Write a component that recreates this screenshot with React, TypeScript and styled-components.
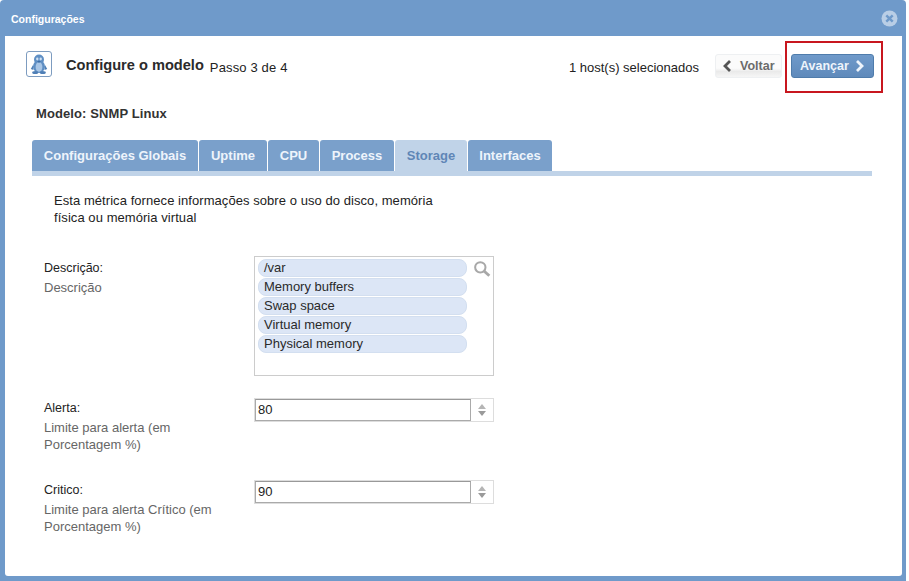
import React from "react";
import styled, { createGlobalStyle } from "styled-components";

const Global = createGlobalStyle`
  html, body { margin: 0; padding: 0; background: #fff; }
  body { font-family: "Liberation Sans", Arial, sans-serif; color: #222; width: 909px; min-height: 581px; }
`;

const Modal = styled.div`
  position: relative;
  box-sizing: border-box;
  width: 906px;
  height: 581px;
  padding-top: 1px;
  display: flex;
  flex-direction: column;
  background: #6f9aca;
  border-radius: 4px 4px 0 0;
`;
const TitleBar = styled.div`
  height: 35px;
  flex: none;
  display: flex;
  align-items: center;
  justify-content: space-between;
  padding: 0 8px 0 11px;
  color: #fff;
  font-size: 10.5px;
  font-weight: bold;
`;
const Body = styled.div`
  flex: 1;
  margin: 0 4px 5px 5px;
  background: #fff;
  border-radius: 0 0 3px 3px;
  padding: 15px 28px 0 21px;
`;
const Header = styled.div`
  display: flex;
  align-items: center;
  height: 26px;
`;
const IconBox = styled.div`
  width: 24px;
  height: 24px;
  border: 1px solid #7d9cc0;
  border-radius: 3px;
  display: flex;
  align-items: center;
  justify-content: center;
  margin-right: 14px;
`;
const Title = styled.span`
  font-size: 14.6px;
  font-weight: bold;
  color: #2b2b2b;
  margin-top: 2px;
`;
const Step = styled.span`
  font-size: 13px;
  letter-spacing: 0.15px;
  color: #222;
  margin: 6px 0 0 6px;
`;
const Hosts = styled.span`
  margin: 6px 16px 0 auto;
  font-size: 13px;
  color: #222;
`;
const NavButton = styled.button<{ $primary?: boolean }>`
  box-sizing: border-box;
  height: 24px;
  display: flex;
  align-items: center;
  gap: ${(p) => (p.$primary ? "6px" : "8px")};
  padding: 0 ${(p) => (p.$primary ? "8px" : "6px")};
  width: ${(p) => (p.$primary ? "83px" : "67px")};
  margin: 4px 0 0 ${(p) => (p.$primary ? "9px" : "0")};
  font: bold 12.5px "Liberation Sans", Arial, sans-serif;
  border-radius: 3px;
  border: 1px solid ${(p) => (p.$primary ? "#4f7cab" : "#eef0f2")};
  color: ${(p) => (p.$primary ? "#eef4fb" : "#6b6b6b")};
  background: ${(p) =>
    p.$primary
      ? "linear-gradient(#6f9aca, #5f8abb)"
      : "linear-gradient(#fbfbfb 60%, #eaeaea 75%, #f6f6f6)"};
`;
const ModelLine = styled.div`
  margin: 29px 0 0 10px;
  font-size: 13px;
  font-weight: bold;
  letter-spacing: 0.1px;
  color: #333;
  line-height: 16px;
`;
const Tabs = styled.div`
  display: flex;
  gap: 1px;
  margin: 18px 0 0 6px;
  height: 31px;
  align-items: stretch;
`;
const Tab = styled.div<{ $active?: boolean; $w: number }>`
  box-sizing: border-box;
  width: ${(p) => p.$w}px;
  display: flex;
  align-items: center;
  justify-content: center;
  border-radius: 3px 3px 0 0;
  font-size: 13px;
  font-weight: bold;
  background: ${(p) => (p.$active ? "#c0d3e8" : "#7aa0cb")};
  color: ${(p) => (p.$active ? "#5f86b6" : "#eef4fb")};
`;
const TabStrip = styled.div`
  height: 5px;
  margin: 0 2px 0 6px;
  background: #c0d3e8;
`;
const Intro = styled.p`
  margin: 16px 0 0 28px;
  width: 400px;
  font-size: 13px;
  letter-spacing: 0.06px;
  line-height: 17px;
  color: #222;
`;
const Form = styled.div`
  margin: 30px 0 0 18px;
  display: flex;
  flex-direction: column;
`;
const Row = styled.div<{ $gap?: number }>`
  display: grid;
  grid-template-columns: 210px 240px;
  margin-top: ${(p) => p.$gap ?? 0}px;
`;
const Label = styled.div<{ $top: number }>`
  font-size: 12.5px;
  line-height: 17px;
  padding-top: ${(p) => p.$top}px;
  color: #222;
`;
const Hint = styled.div`
  font-size: 13px;
  line-height: 17px;
  margin-top: 2px;
  color: #666;
  width: 175px;
`;
const ListBox = styled.div`
  position: relative;
  box-sizing: border-box;
  height: 120px;
  border: 1px solid #ccc;
  padding: 2px 26px 0 3px;
  display: flex;
  flex-direction: column;
  gap: 1px;
`;
const Chip = styled.div`
  height: 18px;
  box-sizing: border-box;
  padding-left: 5px;
  border: 1px solid #d3dff0;
  border-radius: 8px;
  background: #dce6f6;
  font-size: 13px;
  line-height: 16px;
  color: #2a2a2a;
`;
const SearchIcon = styled.svg`
  position: absolute;
  top: 3px;
  right: 2px;
`;
const Spin = styled.div`
  box-sizing: border-box;
  height: 24px;
  border: 1px solid #ddd;
  display: flex;
  align-items: stretch;
`;
const NumberValue = styled.div`
  flex: 1;
  border: 1px solid #aaa;
  border-top-color: #999;
  font-size: 13px;
  line-height: 20px;
  padding-left: 2px;
  color: #222;
`;
const Arrows = styled.div`
  width: 22px;
  display: flex;
  flex-direction: column;
  align-items: center;
  justify-content: center;
  gap: 2px;
`;
const Arrow = styled.div<{ $down?: boolean }>`
  width: 0;
  height: 0;
  border-left: 4px solid transparent;
  border-right: 4px solid transparent;
  ${(p) => (p.$down ? "border-top: 5px solid #9a9a9a;" : "border-bottom: 5px solid #b5b5b5;")}
`;
const Highlight = styled.div`
  position: absolute;
  left: 785px;
  top: 41px;
  width: 94px;
  height: 48px;
  border: 2px solid #c8171f;
  pointer-events: none;
`;

const Chevron = ({ dir, color }: { dir: "l" | "r"; color: string }) => (
  <svg width="10" height="14" viewBox="0 0 10 14">
    <path
      d={dir === "l" ? "M8 2 3 7l5 5" : "M2 2l5 5-5 5"}
      fill="none"
      stroke={color}
      strokeWidth="2.8"
    />
  </svg>
);

const Penguin = () => (
  <svg width="18" height="20" viewBox="0 0 18 20">
    <ellipse cx="9" cy="5.5" rx="5" ry="5" fill="#5f8fc4" />
    <ellipse cx="9" cy="12.5" rx="6" ry="6.5" fill="#5f8fc4" />
    <ellipse cx="9" cy="13" rx="3.4" ry="4.8" fill="#a9c6e6" />
    <ellipse cx="7.3" cy="5" rx="1.2" ry="1.4" fill="#cfe0f2" />
    <ellipse cx="10.7" cy="5" rx="1.2" ry="1.4" fill="#cfe0f2" />
    <path d="M7 7h4L9 9z" fill="#3f6ea5" />
    <path d="M3 11 .8 15l2.6 1zM15 11l2.2 4-2.6 1z" fill="#4f7fb6" />
    <ellipse cx="5.2" cy="18.4" rx="3" ry="1.5" fill="#4f7fb6" />
    <ellipse cx="12.8" cy="18.4" rx="3" ry="1.5" fill="#4f7fb6" />
  </svg>
);

const CloseIcon = () => (
  <svg width="17" height="17" viewBox="0 0 17 17">
    <circle cx="8.5" cy="8.5" r="8" fill="#b9cee6" />
    <path d="M5.3 5.3l6.4 6.4M11.7 5.3l-6.4 6.4" stroke="#6f9aca" strokeWidth="2.4" />
  </svg>
);

const tabs = [
  { label: "Configurações Globais", w: 166 },
  { label: "Uptime", w: 68 },
  { label: "CPU", w: 51 },
  { label: "Process", w: 74 },
  { label: "Storage", w: 72, active: true },
  { label: "Interfaces", w: 84 },
];

const metrics = ["/var", "Memory buffers", "Swap space", "Virtual memory", "Physical memory"];

const NumberField = ({ value }: { value: string }) => (
  <Spin>
    <NumberValue>{value}</NumberValue>
    <Arrows>
      <Arrow />
      <Arrow $down />
    </Arrows>
  </Spin>
);

export default function App() {
  return (
    <>
      <Global />
      <Modal>
        <TitleBar>
          <span>Configurações</span>
          <CloseIcon />
        </TitleBar>
        <Body>
          <Header>
            <IconBox>
              <Penguin />
            </IconBox>
            <Title>Configure o modelo</Title>
            <Step>Passo 3 de 4</Step>
            <Hosts>1 host(s) selecionados</Hosts>
            <NavButton>
              <Chevron dir="l" color="#555" />
              <span>Voltar</span>
            </NavButton>
            <NavButton $primary>
              <span>Avançar</span>
              <Chevron dir="r" color="#eef4fb" />
            </NavButton>
          </Header>
          <ModelLine>Modelo: SNMP Linux</ModelLine>
          <Tabs>
            {tabs.map((t) => (
              <Tab key={t.label} $w={t.w} $active={t.active}>
                {t.label}
              </Tab>
            ))}
          </Tabs>
          <TabStrip />
          <Intro>
            Esta métrica fornece informações sobre o uso do disco, memória
            <br />
            física ou memória virtual
          </Intro>
          <Form>
            <Row>
              <div>
                <Label $top={4}>Descrição:</Label>
                <Hint>Descrição</Hint>
              </div>
              <ListBox>
                {metrics.map((m) => (
                  <Chip key={m}>{m}</Chip>
                ))}
                <SearchIcon width="18" height="18" viewBox="0 0 16 16">
                  <circle cx="6.5" cy="6.5" r="4.6" fill="none" stroke="#a8a8a8" strokeWidth="1.8" />
                  <path d="M10 10l4.5 4" stroke="#a8a8a8" strokeWidth="2.6" />
                </SearchIcon>
              </ListBox>
            </Row>
            <Row $gap={22}>
              <div>
                <Label $top={2}>Alerta:</Label>
                <Hint>Limite para alerta (em Porcentagem %)</Hint>
              </div>
              <NumberField value="80" />
            </Row>
            <Row $gap={27}>
              <div>
                <Label $top={2}>Critico:</Label>
                <Hint>Limite para alerta Crítico (em Porcentagem %)</Hint>
              </div>
              <NumberField value="90" />
            </Row>
          </Form>
        </Body>
        <Highlight />
      </Modal>
    </>
  );
}
